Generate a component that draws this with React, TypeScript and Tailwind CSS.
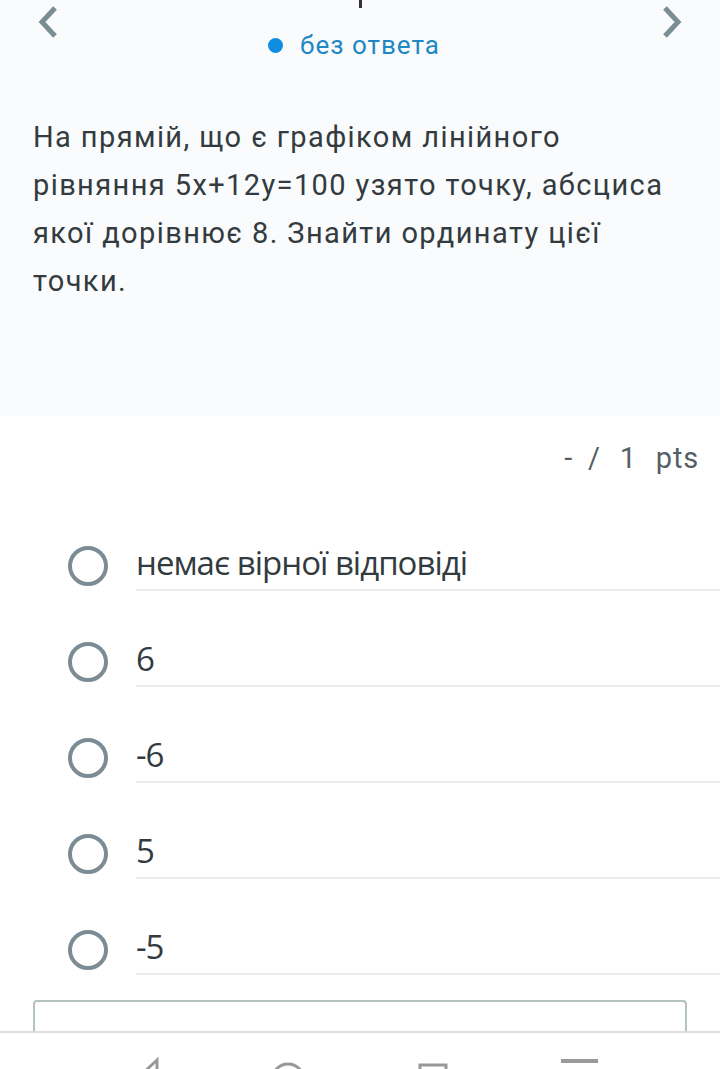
import React from "react";

const options = ["немає вірної відповіді", "6", "-6", "5", "-5"];

export default function App() {
  return (
    <div className="relative w-[720px] h-[1069px] overflow-hidden bg-white" style={{ fontFamily: "Roboto, 'Noto Sans', sans-serif" }}>
      <div className="h-[416px] bg-[#f9fbfc] flex flex-col">
        <div className="h-[90px] flex items-start justify-between px-[36px]">
          <svg width="24" height="34" viewBox="0 0 24 34" className="mt-[4px]">
            <path d="M19 4 L6 18 L19 32" fill="none" stroke="#7b8c94" strokeWidth="5" />
          </svg>
          <div className="flex flex-col items-center">
            <div className="w-[3px] h-[8px] bg-[#333] ml-[0px]" />
            <div className="mt-[23px] h-[28px] flex items-center gap-[17px] pr-[12px]">
              <div className="w-[15px] h-[15px] rounded-full bg-[#0f8de0]" />
              <span className="text-[26px] leading-[28px] tracking-[1px] text-[#1e88c4]">без ответа</span>
            </div>
          </div>
          <svg width="24" height="34" viewBox="0 0 24 34" className="mt-[4px]">
            <path d="M5 4 L18 18 L5 32" fill="none" stroke="#7b8c94" strokeWidth="5" />
          </svg>
        </div>
        <p className="mt-[23px] px-[33px] text-[29px] leading-[48px] tracking-[1.4px] text-[#333b40] whitespace-nowrap">
          На прямій, що є графіком лінійного
          <br />
          рівняння 5x+12y=100 узято точку, абсциса
          <br />
          якої дорівнює 8. Знайти ординату цієї
          <br />
          точки.
        </p>
      </div>
      <div className="h-[79px] pt-[28px] pr-[21px] flex justify-end items-start gap-[15px] text-[29px] leading-[28px] tracking-[0.8px] text-[#555f66]">
        <span>-</span>
        <span>/</span>
        <span className="ml-[4px]">1</span>
        <span className="ml-[4px]">pts</span>
      </div>
      <div className="flex flex-col">
        {options.map((o) => (
          <div key={o} className="h-[96px] flex items-end pl-[68px]">
            <div className="h-[50px] w-[40px] flex items-center">
              <div className="w-[40px] h-[40px] rounded-full border-[4px] border-[#7d8b94]" />
            </div>
            <div className="ml-[28px] flex-1 h-[50px] border-b-2 border-[#eaecec] flex items-center pb-[4px]">
              <span className="text-[33px] tracking-[-1px] text-[#333b40]" style={{ fontFamily: "'Open Sans', 'Noto Sans', sans-serif" }}>{o}</span>
            </div>
          </div>
        ))}
      </div>
      <div className="mt-[25px] mx-[33px] h-[31px] border-2 border-b-0 border-[#b5c2c2] rounded-t-[4px]" />
      <div className="h-[2px] bg-[#dedede]" />
      <svg width="720" height="36" viewBox="0 0 720 36" className="block">
        <path d="M157 27 L141 42 L157 57 Z" fill="none" stroke="#999" strokeWidth="3" />
        <circle cx="288" cy="47" r="16" fill="none" stroke="#999" strokeWidth="3" />
        <rect x="420" y="32" width="26" height="26" fill="none" stroke="#999" strokeWidth="3" />
        <rect x="561" y="26" width="37" height="4" fill="#999" />
      </svg>
    </div>
  );
}
